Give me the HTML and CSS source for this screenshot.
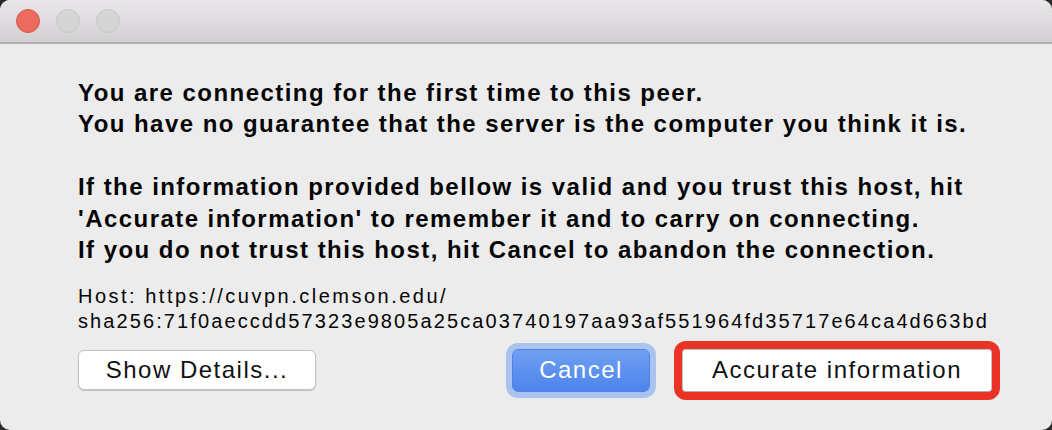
FILE: index.html
```html
<!DOCTYPE html>
<html>
<head>
<meta charset="utf-8">
<link rel="stylesheet" href="styles.css">
</head>
<body>
<div class="window">
  <div class="titlebar">
    <span class="light light-close"></span>
    <span class="light light-off"></span>
    <span class="light light-off"></span>
  </div>
  <div class="content">
    <p class="msg">You are connecting for the first time to this peer.<br>You have no guarantee that the server is the computer you think it is.</p>
    <p class="msg msg-2">If the information provided bellow is valid and you trust this host, hit<br>'Accurate information' to remember it and to carry on connecting.<br>If you do not trust this host, hit Cancel to abandon the connection.</p>
    <p class="host">Host: https://cuvpn.clemson.edu/<br>sha256:71f0aeccdd57323e9805a25ca03740197aa93af551964fd35717e64ca4d663bd</p>
    <div class="buttons">
      <button class="btn btn-details">Show Details...</button>
      <button class="btn btn-cancel">Cancel</button>
      <button class="btn btn-accurate">Accurate information</button>
    </div>
  </div>
</div>
</body>
</html>
```
FILE: styles.css
```css
html, body {
  margin: 0;
  padding: 0;
  background: #2a2a2a;
}
body {
  width: 1052px;
  height: 430px;
  overflow: hidden;
  font-family: "Liberation Sans", Arial, sans-serif;
}
.window {
  width: 1052px;
  height: 430px;
  background: #ececec;
  border-radius: 10px;
  overflow: hidden;
  display: flex;
  flex-direction: column;
}
.titlebar {
  height: 42px;
  border-bottom: 2px solid #b2b1b2;
  background: linear-gradient(#e9e7e9, #d2d0d2);
  display: flex;
  align-items: center;
  padding-left: 16px;
  gap: 16px;
  box-sizing: content-box;
  flex-shrink: 0;
}
.light {
  width: 24px;
  height: 24px;
  border-radius: 50%;
  box-sizing: border-box;
}
.light-close {
  background: #ec6b5f;
  border: 1px solid #d8584c;
}
.light-off {
  background: #d6d5d6;
  border: 1px solid #c6c5c6;
}
.content {
  padding: 33px 0 0 78px;
  color: #050505;
}
.msg {
  margin: 0;
  font-size: 24px;
  line-height: 31px;
  font-weight: bold;
  letter-spacing: 1.45px;
}
.msg-2 {
  margin-top: 32px;
  line-height: 31.5px;
}
.host {
  margin: 18px 0 0;
  font-size: 20px;
  line-height: 25.5px;
  letter-spacing: 2.1px;
}
.host::first-line {
  letter-spacing: 2.5px;
}
.buttons {
  display: flex;
  align-items: center;
  margin-top: 14px;
  padding-right: 60px;
}
.btn {
  font-family: "Liberation Sans", Arial, sans-serif;
  font-size: 24px;
  letter-spacing: 1.5px;
  border-radius: 6px;
  padding: 0;
  margin: 0;
}
.btn-details {
  width: 238px;
  height: 40px;
  background: #ffffff;
  border: 1px solid #c3c3c3;
  box-shadow: 0 1px 1px rgba(0,0,0,0.18);
  color: #111;
}
.btn-cancel {
  margin-left: auto;
  width: 138px;
  height: 43px;
  border: 1px solid #4c82e8;
  background: linear-gradient(#6fa0f2, #4e84eb);
  color: #ffffff;
  box-shadow: 0 0 0 6px #aac3ee;
}
.btn-accurate {
  margin-left: 32px;
  width: 310px;
  height: 43px;
  border-radius: 4px;
  background: #ffffff;
  border: 1px solid #c3c3c3;
  border-bottom-color: #adadad;
  box-shadow: 0 1px 1px rgba(0,0,0,0.15);
  color: #111;
  outline: 8px solid #ea3326;
  outline-offset: 0px;
}
```
